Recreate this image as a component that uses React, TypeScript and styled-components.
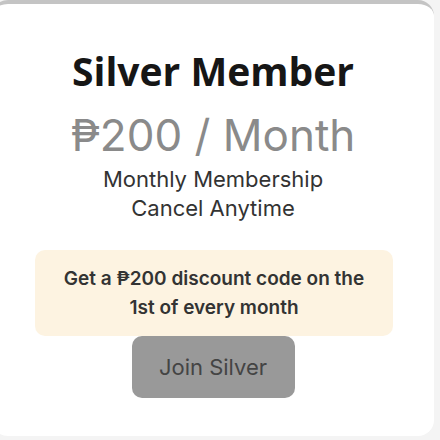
import styled, { createGlobalStyle } from 'styled-components';

const GlobalStyle = createGlobalStyle`
  html, body {
    margin: 0;
    padding: 0;
    background: #f4f4f4;
    overflow: hidden;
  }
`;

const Page = styled.div`
  width: 440px;
  height: 440px;
  overflow: hidden;
`;

const Card = styled.div`
  box-sizing: border-box;
  width: 442px;
  height: 436px;
  margin-left: -8px;
  background: #fff;
  border-top: 4px solid #c4c4c4;
  border-radius: 16px;
  display: flex;
  flex-direction: column;
  align-items: center;
  padding-top: 42px;
  font-family: Inter, 'Liberation Sans', sans-serif;
`;

const Title = styled.h2`
  margin: 0;
  font-family: 'Open Sans', 'Noto Sans', sans-serif;
  font-weight: 700;
  font-size: 39px;
  line-height: 50px;
  color: #161616;
`;

const Price = styled.div`
  margin-top: 13px;
  font-size: 44px;
  line-height: 52px;
  color: #8a8a8a;
`;

const Terms = styled.div`
  margin-top: 4px;
  font-size: 22px;
  line-height: 29px;
  color: #333;
  text-align: center;
`;

const Perk = styled.div`
  box-sizing: border-box;
  width: 358px;
  margin-top: 27px;
  margin-left: 2px;
  padding: 14px 16px;
  background: #fdf3e1;
  border-radius: 10px;
  font-size: 19px;
  font-weight: 600;
  line-height: 29px;
  color: #333;
  text-align: center;
`;

const JoinButton = styled.button`
  width: 163px;
  height: 62px;
  border: none;
  border-radius: 10px;
  background: #999;
  font-family: Inter, 'Liberation Sans', sans-serif;
  font-size: 22px;
  color: #444;
  cursor: pointer;
`;

export default function App() {
  return (
    <Page>
      <GlobalStyle />
      <Card>
        <Title>Silver Member</Title>
        <Price>₱200 / Month</Price>
        <Terms>
          Monthly Membership
          <br />
          Cancel Anytime
        </Terms>
        <Perk>Get a ₱200 discount code on the 1st of every month</Perk>
        <JoinButton>Join Silver</JoinButton>
      </Card>
    </Page>
  );
}
